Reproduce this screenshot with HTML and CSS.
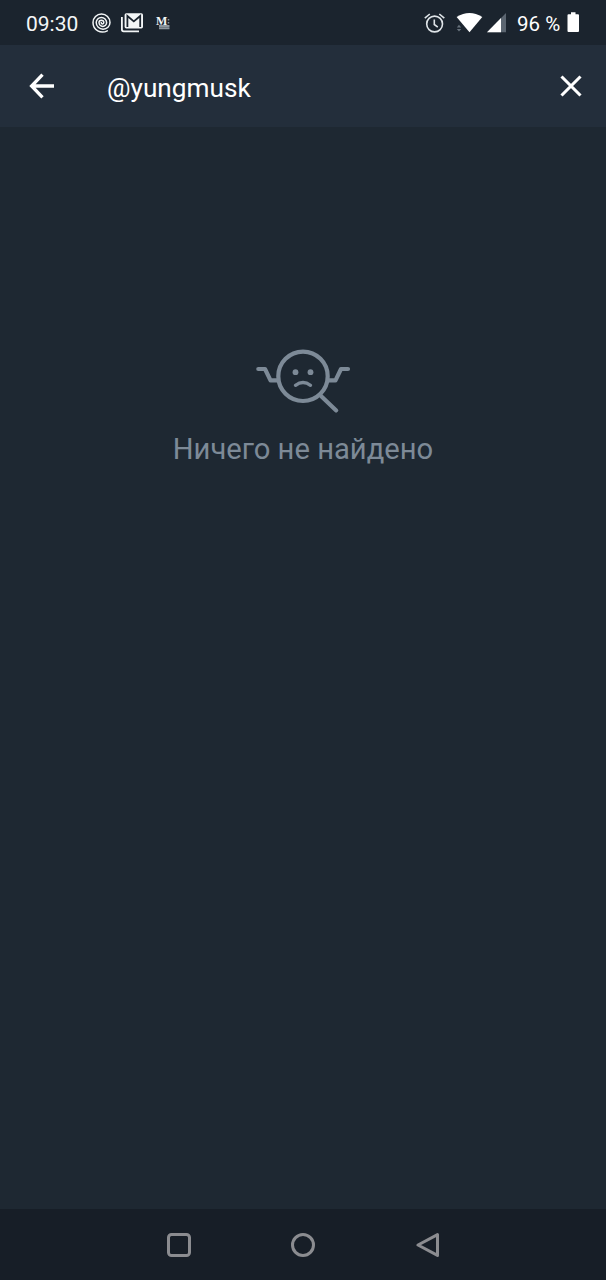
FILE: index.html
```
<!DOCTYPE html>
<html lang="ru">
<head>
<meta charset="utf-8">
<title>Поиск</title>
<link rel="stylesheet" href="styles.css">
</head>
<body>
<div class="screen">
  <div class="status">
    <span class="time">09:30</span>
    <svg class="spiral" width="20" height="20" viewBox="92 13 20 20" fill="none" stroke="#f3f6f7" stroke-width="1.500" stroke-linecap="round">
      <path d="M101.200 22.600A1.300 1.300 0 0 0 103.800 22.600A2.400 2.400 0 0 0 99 22.600A3.800 3.800 0 0 0 106.600 22.600A5.200 5.200 0 0 0 96.200 22.600A6.900 6.600 0 0 0 110 22.600A8.500 8.500 0 0 0 93 22.600C93 30.500 101 34 107.300 30.800"/>
    </svg>
    <svg class="mail" width="23" height="20" viewBox="121 13 23 20">
      <path d="M121.900 17v12.600a1.700 1.700 0 0 0 1.700 1.700H139" fill="none" stroke="#f3f6f7" stroke-width="1.800"/>
      <rect x="124.600" y="13.200" width="18.400" height="15.300" rx="1.700" fill="#f3f6f7"/>
      <path d="M127.400 27V16l6.400 5.400 6.400-5.400v11" fill="none" stroke="#1b242e" stroke-width="1.800"/>
    </svg>
    <span class="medium"><b>M</b><svg width="15" height="17" viewBox="156 15 15 17" fill="none" stroke="#8d969e"><path d="M159 26h10.500M159 28.300h10.500" stroke-width="1.900"/><path d="M168.500 19v1.500M168.500 22v1.500" stroke-width="1.500"/></svg></span>
    <span class="fill"></span>
    <svg class="alarm" width="21" height="22" viewBox="424 12 21 22" fill="none" stroke="#dfe4e8" stroke-width="1.600">
      <circle cx="434.600" cy="24" r="7.900"/>
      <path d="M434.300 19.500v5l3.500 2.600M424.800 18.200l5-4.200M444.300 18.200l-5-4.200"/>
    </svg>
    <svg class="wifi" width="27" height="21" viewBox="456 12 27 21">
      <path d="M456.600 16.900Q469.500 9 482.300 16.900L469.500 32.300Z" fill="#fff"/>
      <path d="M456.800 27.400l2.200-2.600 2.200 2.600ZM456.800 29l2.200 2.600 2.200-2.600Z" fill="#66717b"/>
    </svg>
    <svg class="signal" width="20" height="20" viewBox="487 13 20 20"><path d="M487 32.200 506 13v19.200Z" fill="#5b6570"/><path d="M487 32.200 501 18v14.200Z" fill="#fff"/></svg>
    <span class="percent">96 %</span>
    <svg class="battery" width="12" height="20" viewBox="567 12 12 20"><path d="M571 12.300h4.500v1.900H578a1 1 0 0 1 1 1V31a1 1 0 0 1-1 1h-9.500a1 1 0 0 1-1-1V15.200a1 1 0 0 1 1-1H571Z" fill="#fff"/></svg>
  </div>
  <div class="search">
    <svg class="back" width="26" height="26" viewBox="29 73 26 26" fill="none" stroke="#fff" stroke-width="3.300"><path d="M54 86H32M42.500 74.600 31.600 86l10.900 11.400"/></svg>
    <span class="query">@yungmusk</span>
    <svg class="clear" width="22" height="22" viewBox="560 75 22 22" fill="none" stroke="#fff" stroke-width="3.100"><path d="M561.500 76.500l19 19M580.500 76.500l-19 19"/></svg>
  </div>
  <div class="empty">
    <svg width="96" height="66" viewBox="255 348 96 66" fill="none" stroke="#7d8a97" stroke-width="4.200" stroke-linecap="round" stroke-linejoin="round">
      <circle cx="303" cy="376.300" r="24.700"/>
      <path d="M258.300 369h6.700l5.500 11.300h7M348 369h-7l-5.500 11.300h-7M321 396l15.200 14.400"/>
      <path d="M295.500 385.300q7.500-5.400 15 0" stroke-width="3.400"/>
      <g fill="#7d8a97" stroke="none"><circle cx="295.500" cy="372.200" r="2.900"/><circle cx="310.500" cy="372.200" r="2.900"/></g>
    </svg>
    <div class="message">Ничего не найдено</div>
  </div>
  <div class="nav">
    <svg width="24" height="24" viewBox="0 0 24 24"><rect x="1.500" y="1.500" width="21" height="21" rx="3"/></svg>
    <svg width="24" height="24" viewBox="0 0 24 24"><circle cx="12" cy="12" r="10.500"/></svg>
    <svg width="24" height="24" viewBox="0 0 24 24"><path d="M22.500 1.600v20.800L3 12Z"/></svg>
  </div>
</div>
</body>
</html>
```
FILE: styles.css
```
body { margin: 0; }
.screen {
  width: 606px;
  height: 1280px;
  display: flex;
  flex-direction: column;
  background: #1e2832;
  font-family: Roboto, sans-serif;
  color: #fff;
  overflow: hidden;
}
svg { display: block; flex: none; }
.status {
  height: 45px;
  flex: none;
  display: flex;
  align-items: flex-start;
  box-sizing: border-box;
  padding: 12px 27px 0 26px;
  background: #1b242e;
  font-size: 21px;
  line-height: 24px;
}
.time { width: 66px; color: #f3f6f7; }
.spiral { margin-top: 1px; }
.mail { margin: 1px 0 0 9px; }
.medium { display: grid; margin: 3px 0 0 12px; }
.medium b, .medium svg { grid-area: 1 / 1; }
.medium b { font: bold 12px/12px "Liberation Serif", serif; color: #f3f6f7; }
.fill { flex: 1; }
.wifi { margin-left: 11px; }
.signal { margin: 1px 0 0 4px; }
.percent { width: 50px; margin-left: 10px; white-space: nowrap; font-size: 20.5px; }
.search {
  height: 82px;
  flex: none;
  display: flex;
  align-items: center;
  box-sizing: border-box;
  padding: 0 24px 0 29px;
  background: #232e3b;
}
.query { flex: 1; margin: 3px 0 0 52px; font-size: 26.2px; line-height: 32px; }
.empty {
  flex: 1;
  display: flex;
  flex-direction: column;
  align-items: center;
  padding-top: 221px;
  color: #7d8a97;
}
.message { margin-top: 17px; font-size: 29.2px; line-height: 36px; }
.nav {
  height: 71px;
  flex: none;
  display: flex;
  justify-content: center;
  align-items: center;
  gap: 100px;
  background: #171e27;
}
.nav svg { fill: none; stroke: #8b8c90; stroke-width: 3; stroke-linejoin: round; }
```
